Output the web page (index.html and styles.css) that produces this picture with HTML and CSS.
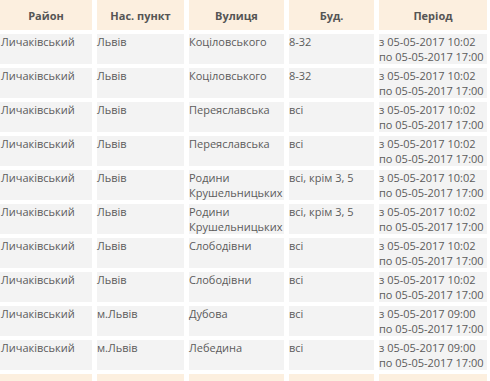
FILE: index.html
```html
<!DOCTYPE html>
<html lang="uk">
<head>
<meta charset="utf-8">
<link rel="stylesheet" href="styles.css">
</head>
<body>
<table class="schedule">
  <colgroup>
    <col class="c1"><col class="c2"><col class="c3"><col class="c4"><col class="c5">
  </colgroup>
  <thead>
    <tr><th>Район</th><th>Нас. пункт</th><th>Вулиця</th><th>Буд.</th><th>Період</th></tr>
  </thead>
  <tbody>
    <tr><td>Личаківський</td><td>Львів</td><td>Коціловського</td><td>8-32</td><td class="period">з 05-05-2017 10:02<br>по 05-05-2017 17:00</td></tr>
    <tr><td>Личаківський</td><td>Львів</td><td>Коціловського</td><td>8-32</td><td class="period">з 05-05-2017 10:02<br>по 05-05-2017 17:00</td></tr>
    <tr><td>Личаківський</td><td>Львів</td><td>Переяславська</td><td>всі</td><td class="period">з 05-05-2017 10:02<br>по 05-05-2017 17:00</td></tr>
    <tr><td>Личаківський</td><td>Львів</td><td>Переяславська</td><td>всі</td><td class="period">з 05-05-2017 10:02<br>по 05-05-2017 17:00</td></tr>
    <tr><td>Личаківський</td><td>Львів</td><td>Родини Крушельницьких</td><td>всі, крім 3, 5</td><td class="period">з 05-05-2017 10:02<br>по 05-05-2017 17:00</td></tr>
    <tr><td>Личаківський</td><td>Львів</td><td>Родини Крушельницьких</td><td>всі, крім 3, 5</td><td class="period">з 05-05-2017 10:02<br>по 05-05-2017 17:00</td></tr>
    <tr><td>Личаківський</td><td>Львів</td><td>Слободівни</td><td>всі</td><td class="period">з 05-05-2017 10:02<br>по 05-05-2017 17:00</td></tr>
    <tr><td>Личаківський</td><td>Львів</td><td>Слободівни</td><td>всі</td><td class="period">з 05-05-2017 10:02<br>по 05-05-2017 17:00</td></tr>
    <tr><td>Личаківський</td><td>м.Львів</td><td>Дубова</td><td>всі</td><td class="period">з 05-05-2017 09:00<br>по 05-05-2017 17:00</td></tr>
    <tr><td>Личаківський</td><td>м.Львів</td><td>Лебедина</td><td>всі</td><td class="period">з 05-05-2017 09:00<br>по 05-05-2017 17:00</td></tr>
  </tbody>
  <tfoot>
    <tr><td></td><td></td><td></td><td></td><td></td></tr>
  </tfoot>
</table>
</body>
</html>
```
FILE: styles.css
```css
html, body {
  margin: 0;
  padding: 0;
  background: #ffffff;
  overflow: hidden;
}
body {
  font-family: "Open Sans", "Liberation Sans", sans-serif;
  font-size: 11px;
  color: #5b5b5b;
}
.schedule {
  border-collapse: separate;
  border-spacing: 5px 4px;
  margin: -4px 0 0 -5px;
  table-layout: fixed;
  width: 497px;
}
.c1 { width: 92px; }
.c2 { width: 87px; }
.c3 { width: 95px; }
.c4 { width: 85px; }
.c5 { width: 108px; }
.schedule th {
  background: #fcefdf;
  color: #555555;
  font-weight: 700;
  font-size: 11px;
  line-height: 15px;
  height: 30px;
  padding: 0;
  text-align: center;
  vertical-align: middle;
}
.schedule td {
  background: #f3f3f3;
  height: 30px;
  padding: 0;
  line-height: 15px;
  vertical-align: top;
  text-align: left;
}
.schedule td.period {
  white-space: nowrap;
}
.schedule td:first-child {
  padding-left: 1px;
}
.schedule tfoot td {
  background: #fcefdf;
}
```
